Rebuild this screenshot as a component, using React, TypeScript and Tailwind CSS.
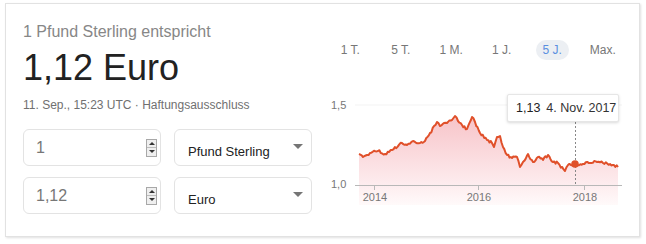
const keys: [number, number][] = [
  [359, 154], [363, 157], [367, 155], [370, 153], [378, 151], [385, 154], [392, 150],
  [402, 143], [407, 145], [413, 141], [420, 143], [425, 141], [430, 133], [437, 122],
  [440, 126], [444, 123], [447, 123], [452, 120], [455, 116], [458, 121], [462, 125],
  [467, 129], [472, 117], [475, 122], [480, 133], [487, 140], [492, 143], [494, 147],
  [497, 137], [500, 136], [503, 147], [507, 155], [512, 158], [517, 157], [520, 167],
  [523, 162], [528, 154], [533, 162], [538, 157], [543, 160], [548, 155], [553, 162],
  [558, 163], [565, 171], [568, 165], [575, 164], [583, 164], [590, 163], [597, 162],
  [603, 163], [610, 164], [618, 167],
]

function rnd(x: number) {
  const r = Math.sin(x * 78.233 + 1.3) * 43758.5453
  return r - Math.floor(r)
}

function buildLine() {
  const pts: [number, number][] = []
  for (let i = 0; i < keys.length - 1; i++) {
    const [x0, y0] = keys[i]
    const [x1, y1] = keys[i + 1]
    const n = Math.max(1, Math.round((x1 - x0) / 1.4))
    for (let j = 0; j < n; j++) {
      const t = j / n
      const x = x0 + (x1 - x0) * t
      const jit = j === 0 ? 0 : (rnd(x) - 0.5) * 3
      pts.push([x, y0 + (y1 - y0) * t + jit])
    }
  }
  pts.push(keys[keys.length - 1])
  return pts
}

const linePts = buildLine()
const lineD = 'M' + linePts.map(([x, y]) => `${x.toFixed(1)} ${y.toFixed(1)}`).join(' L')
const areaD = lineD + ' L618 205 L359 205 Z'

const tabs = ['1 T.', '5 T.', '1 M.', '1 J.', '5 J.', 'Max.']

function Spinner() {
  return (
    <div className="ml-auto mr-[3px] flex h-[18px] w-[11px] flex-col border border-[#a8a8a8] bg-[#efefef]">
      <div className="flex flex-1 items-center justify-center border-b border-[#bdbdbd]">
        <div className="h-0 w-0 border-x-[3px] border-b-[3px] border-x-transparent border-b-[#333]" />
      </div>
      <div className="flex flex-1 items-center justify-center">
        <div className="h-0 w-0 border-x-[3px] border-t-[3px] border-x-transparent border-t-[#333]" />
      </div>
    </div>
  )
}

function Row({ amount, currency }: { amount: string; currency: string }) {
  return (
    <div className="flex gap-[13px]">
      <div className="flex h-[37px] w-[138px] items-center rounded-[6px] border border-[#e3e3e3] pl-[12px]">
        <span className="text-[16px] leading-[20px] text-[#777]">{amount}</span>
        <Spinner />
      </div>
      <div className="flex h-[37px] w-[138px] items-center rounded-[6px] border border-[#e3e3e3] pl-[13px]">
        <span className="mt-[8px] text-[13px] leading-[16px] text-[#222]">{currency}</span>
        <div className="mb-[3px] ml-auto mr-[8px] h-0 w-0 border-x-[5px] border-t-[5px] border-x-transparent border-t-[#757575]" />
      </div>
    </div>
  )
}

export default function App() {
  return (
    <div className="h-[244px] w-[646px] bg-white pl-[5px] pt-[3px] font-['Liberation_Sans',Arial,sans-serif]">
      <div className="flex h-[234px] w-[635px] border border-[#e2e2e2] shadow-[1px_1px_2px_rgba(0,0,0,0.12)]">
        {/* Left: conversion */}
        <div className="w-[306px] pl-[17px] pt-[18px]">
          <div className="text-[16px] leading-[20px] text-[#878787]">1 Pfund Sterling entspricht</div>
          <div className="mt-[6px] text-[36px] leading-[40px] text-[#222]">1,12 Euro</div>
          <div className="mt-[9px] text-[12px] leading-[16px] text-[#707070]">
            11. Sep., 15:23 UTC · Haftungsausschluss
          </div>
          <div className="mt-[16px] flex flex-col gap-[11px]">
            <Row amount="1" currency="Pfund Sterling" />
            <Row amount="1,12" currency="Euro" />
          </div>
        </div>

        {/* Right: chart */}
        <div className="ml-[13px] w-[303px] pt-[36px]">
          <div className="grid h-[20px] grid-cols-6">
            {tabs.map((t) => (
              <div key={t} className="flex items-center justify-center">
                {t === '5 J.' ? (
                  <span className="flex h-[20px] w-[33px] items-center justify-center rounded-full bg-[#eceff3] text-[12px] text-[#5b8fe0]">
                    {t}
                  </span>
                ) : (
                  <span className="text-[12px] text-[#777]">{t}</span>
                )}
              </div>
            ))}
          </div>

          <div className="relative mt-[28px] h-[125px]">
            <svg width="303" height="125" viewBox="325 88 303 125" className="block">
              <defs>
                <linearGradient id="fill" x1="0" y1="115" x2="0" y2="207" gradientUnits="userSpaceOnUse">
                  <stop offset="0" stopColor="#f7c3c8" />
                  <stop offset="0.75" stopColor="#fdecee" />
                  <stop offset="1" stopColor="#fffbfb" />
                </linearGradient>
              </defs>
              <line x1="355" y1="105" x2="622" y2="105" stroke="#f3f3f3" strokeWidth="1" />
              <path d={areaD} fill="url(#fill)" />
              <line x1="355" y1="185.5" x2="622" y2="185.5" stroke="#b8b8b8" strokeWidth="1" />
              {[374, 478, 584].map((x) => (
                <line key={x} x1={x + 0.5} y1="185" x2={x + 0.5} y2="190" stroke="#b8b8b8" strokeWidth="1" />
              ))}
              <line x1="575.5" y1="122" x2="575.5" y2="185" stroke="#888" strokeWidth="1" strokeDasharray="2 2" />
              <path d={lineD} fill="none" stroke="#e0502a" strokeWidth="2" strokeLinejoin="round" />
              <circle cx="575" cy="164" r="3.8" fill="#e0502a" />
              <g fontFamily="'Liberation Sans', Arial, sans-serif" fontSize="11" fill="#777">
                <text x="331" y="109">1,5</text>
                <text x="331" y="188">1,0</text>
                <text x="375" y="201" textAnchor="middle">2014</text>
                <text x="479" y="201" textAnchor="middle">2016</text>
                <text x="585" y="201" textAnchor="middle">2018</text>
              </g>
            </svg>

            {/* Tooltip */}
            <div className="absolute left-[182px] top-[6px] flex h-[28px] w-[112px] items-center gap-[6px] rounded-[2px] border border-[#e6e6e6] bg-white pl-[8px] text-[12.5px] leading-[16px] shadow-[0_1px_3px_rgba(0,0,0,0.15)]">
              <span className="text-[#222]">1,13</span>
              <span className="text-[#333]">4. Nov. 2017</span>
            </div>
          </div>
        </div>
      </div>
    </div>
  )
}
